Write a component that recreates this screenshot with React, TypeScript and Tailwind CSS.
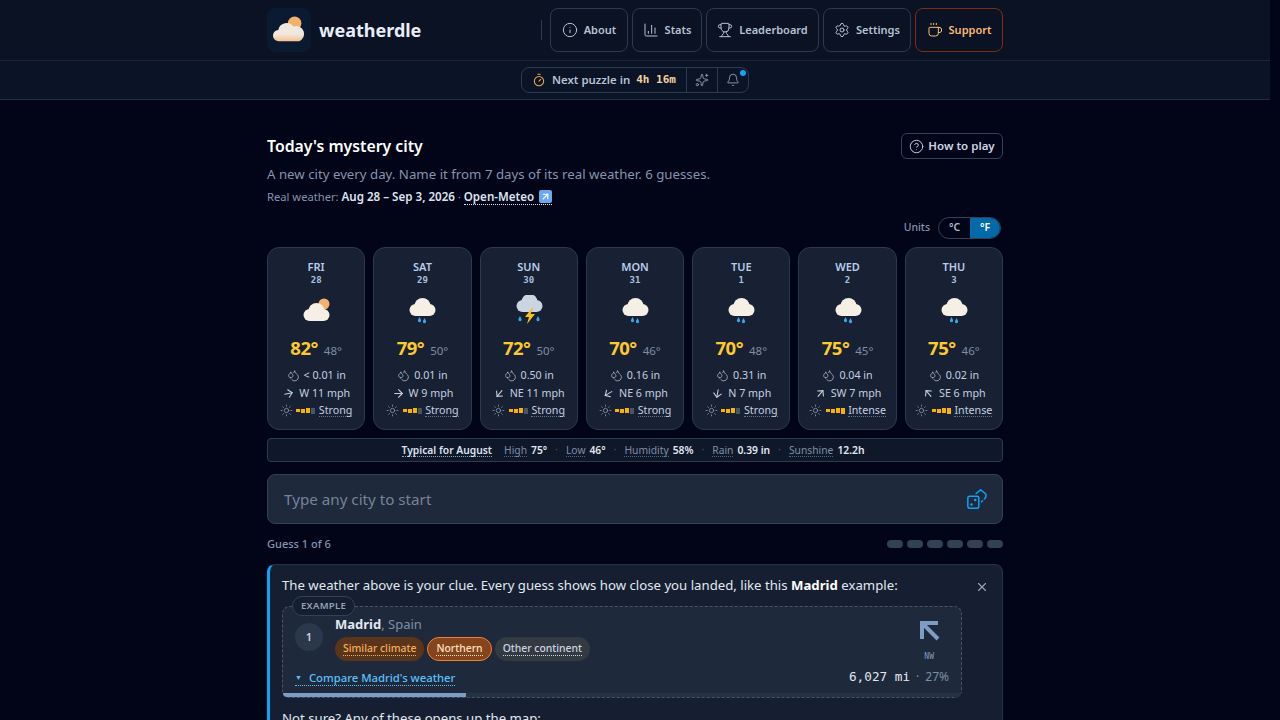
import { Info, ChartColumn, Trophy, Settings, Coffee, Timer, Sparkles, Bell, CircleHelp, Droplets, Sun, ArrowRight, X, ArrowUpLeft } from "lucide-react";
import type { ReactNode } from "react";

const days = [
  { day: "FRI", date: "28", icon: "sun", hi: "82°", lo: "48°", rain: "< 0.01 in", wind: "W 11 mph", rot: "-rotate-[12deg]", uv: "Strong", bars: 3 },
  { day: "SAT", date: "29", icon: "rain", hi: "79°", lo: "50°", rain: "0.01 in", wind: "W 9 mph", rot: "rotate-0", uv: "Strong", bars: 3 },
  { day: "SUN", date: "30", icon: "storm", hi: "72°", lo: "50°", rain: "0.50 in", wind: "NE 11 mph", rot: "rotate-[130deg]", uv: "Strong", bars: 3 },
  { day: "MON", date: "31", icon: "rain", hi: "70°", lo: "46°", rain: "0.16 in", wind: "NE 6 mph", rot: "rotate-[150deg]", uv: "Strong", bars: 3 },
  { day: "TUE", date: "1", icon: "rain", hi: "70°", lo: "48°", rain: "0.31 in", wind: "N 7 mph", rot: "rotate-[100deg]", uv: "Strong", bars: 3 },
  { day: "WED", date: "2", icon: "rain", hi: "75°", lo: "45°", rain: "0.04 in", wind: "SW 7 mph", rot: "-rotate-[50deg]", uv: "Intense", bars: 4 },
  { day: "THU", date: "3", icon: "rain", hi: "75°", lo: "46°", rain: "0.02 in", wind: "SE 6 mph", rot: "-rotate-[130deg]", uv: "Intense", bars: 4 },
];

function Cloud({ fill, dy }: { fill: string; dy: number }) {
  return (
    <g fill={fill} transform={`translate(0 ${dy})`}>
      <circle cx="9.5" cy="17" r="6" />
      <circle cx="16.5" cy="13" r="8" />
      <circle cx="23.5" cy="17" r="6" />
      <rect x="9.5" y="14" width="14" height="9" />
    </g>
  );
}

function WeatherIcon({ kind }: { kind: string }) {
  return (
    <svg viewBox="0 0 32 36" className="h-[36px] w-[32px]">
      {kind === "sun" && <circle cx="24" cy="9" r="5.5" fill="#f4b16c" />}
      {kind === "sun" && <Cloud fill="#f5efe6" dy={3} />}
      {kind === "rain" && <Cloud fill="#f5efe6" dy={-2} />}
      {kind === "storm" && <Cloud fill="#cbd5e1" dy={-6} />}
      {kind === "rain" && (
        <g fill="#38a9e8">
          <path d="M13.5 22l1.4 2.8a1.6 1.6 0 1 1-2.8 0z" />
          <path d="M18.5 23l1.4 2.8a1.6 1.6 0 1 1-2.8 0z" />
        </g>
      )}
      {kind === "storm" && (
        <g>
          <path d="M7 21l1.4 2.8a1.6 1.6 0 1 1-2.8 0zM25 21l1.4 2.8a1.6 1.6 0 1 1-2.8 0z" fill="#38a9e8" />
          <path d="M19 13l-7 9h4l-2 7 8-10h-4.5l3-6z" fill="#fbbf24" />
        </g>
      )}
    </svg>
  );
}

function NavButton({ icon, label, width, accent }: { icon: ReactNode; label: string; width: string; accent?: boolean }) {
  return (
    <button
      className={
        (accent
          ? "flex h-[44px] items-center justify-center gap-[6px] rounded-lg border border-[#7c2d12] text-[11px] font-semibold text-[#fdba74] "
          : "flex h-[44px] items-center justify-center gap-[6px] rounded-lg border border-[#2b3a4e] text-[11px] font-semibold text-[#b6c2d4] ") + width
      }
    >
      {icon}
      {label}
    </button>
  );
}

function UvBars({ filled }: { filled: number }) {
  return (
    <span className="flex items-center gap-[1px]">
      <span className="h-[3px] w-[4px] bg-[#fbb004]" />
      <span className="h-[4px] w-[4px] bg-[#fbb004]" />
      <span className="h-[5px] w-[4px] bg-[#fbb004]" />
      <span className={filled > 3 ? "h-[6px] w-[4px] bg-[#fbb004]" : "h-[6px] w-[4px] bg-[#475569]"} />
    </span>
  );
}

function DayCard({ d }: { d: (typeof days)[number] }) {
  return (
    <div className="flex h-[183px] flex-col items-center rounded-xl border border-[#2b3a4e] bg-[#172133] pt-[12px]">
      <div className="text-[11px] leading-[14px] font-semibold text-[#b9cdea]">{d.day}</div>
      <div className="mt-[1px] font-['DejaVu_Sans_Mono',monospace] text-[9px] leading-[10px] font-semibold text-[#a9c0e0]">{d.date}</div>
      <div className="mt-[10px]">
        <WeatherIcon kind={d.icon} />
      </div>
      <div className="mt-[3px] flex items-baseline gap-[6px]">
        <span className="text-[18.5px] leading-[28px] font-bold tracking-[-0.5px] text-[#fdc92f]">{d.hi}</span>
        <span className="text-[11.5px] text-[#7d8da6]">{d.lo}</span>
      </div>
      <div className="mt-[4px] flex h-[18px] items-center gap-[4px] text-[10.7px] text-[#c4d0e0]">
        <Droplets size={13} strokeWidth={1.5} className="text-[#aab7c9]" />
        {d.rain}
      </div>
      <div className="flex h-[18px] items-center gap-[4px] text-[10.7px] text-[#c4d0e0]">
        <ArrowRight size={13} strokeWidth={2} className={d.rot} />
        {d.wind}
      </div>
      <div className="flex h-[17px] items-center gap-[3.5px] text-[10.7px] text-[#c4d0e0]">
        <Sun size={13} strokeWidth={1.5} className="text-[#8a99ae]" />
        <UvBars filled={d.bars} />
        <span className="border-b border-dotted border-[#64748b] leading-[12px]">{d.uv}</span>
      </div>
    </div>
  );
}

function Stat({ label, value }: { label: string; value: string }) {
  return (
    <span className="flex items-center gap-[4px] pt-[1px]">
      <span className="border-b border-dotted border-[#56657b] leading-[12px] text-[#7f8ea6]">{label}</span>
      <span className="font-semibold text-[#e2e8f0]">{value}</span>
    </span>
  );
}

function Dot() {
  return <span className="text-[#475569]">·</span>;
}

function Chip({ className, children }: { className: string; children: ReactNode }) {
  return (
    <span className={"flex h-[24px] items-center rounded-full px-[8px] text-[10.4px] font-medium " + className}>
      <span className="border-b border-dotted border-current leading-[13px]">{children}</span>
    </span>
  );
}

export default function App() {
  return (
    <div className="flex h-[720px] overflow-hidden bg-[#020417] font-['Noto_Sans',sans-serif] text-[#e2e8f0]">
      <div className="min-w-0 flex-1">
        <header className="h-[61px] border-b border-[#1a2536] bg-[#0b1224]">
          <div className="mx-auto flex h-[60px] w-[736px] items-center">
            <div className="flex h-[44px] w-[44px] items-center justify-center rounded-lg bg-[#0a1a30]">
              <svg viewBox="0 0 32 32" className="h-[36px] w-[36px]">
                <defs>
                  <linearGradient id="logoCloud" x1="0" y1="0" x2="0" y2="1">
                    <stop offset="0.6" stopColor="#f1e9df" />
                    <stop offset="1" stopColor="#f6c190" />
                  </linearGradient>
                </defs>
                <circle cx="21" cy="10" r="6" fill="#f4b16c" />
                <path d="M7 26a5 5 0 0 1-.5-10A7.5 7.5 0 0 1 20 13a6.5 6.5 0 0 1 5 13z" fill="url(#logoCloud)" />
              </svg>
            </div>
            <span className="ml-[8px] text-[18px] font-bold text-[#e8edf7]">weatherdle</span>
            <div className="mr-[8px] ml-auto h-[20px] w-px bg-[#2b3a4e]" />
            <div className="flex gap-[4px]">
              <NavButton width="w-[78px]" icon={<Info size={16} strokeWidth={1.5} />} label="About" />
              <NavButton width="w-[70px]" icon={<ChartColumn size={16} strokeWidth={1.5} />} label="Stats" />
              <NavButton width="w-[113px]" icon={<Trophy size={16} strokeWidth={1.5} />} label="Leaderboard" />
              <NavButton width="w-[88px]" icon={<Settings size={16} strokeWidth={1.5} />} label="Settings" />
              <NavButton width="w-[88px]" icon={<Coffee size={16} strokeWidth={1.5} />} label="Support" accent />
            </div>
          </div>
        </header>

        <div className="flex h-[39px] items-center justify-center border-b border-[#232f40] bg-[#0b1326]">
          <div className="relative flex h-[26px] items-center rounded-lg border border-[#2b3a4e] text-[11.4px] font-semibold text-[#b6c2d4]">
            <div className="flex h-full items-center gap-[6px] px-[10px]">
              <Timer size={14} strokeWidth={1.75} className="text-[#f4a949]" />
              Next puzzle in
              <span className="font-['DejaVu_Sans_Mono',monospace] text-[11px] font-bold whitespace-pre text-[#f6cf9f]">4h 16m</span>
            </div>
            <div className="flex h-full w-[31px] items-center justify-center border-l border-[#2b3a4e]">
              <Sparkles size={14} strokeWidth={1.5} className="text-[#94a3b8]" />
            </div>
            <div className="flex h-full w-[31px] items-center justify-center border-l border-[#2b3a4e]">
              <Bell size={14} strokeWidth={1.5} className="text-[#94a3b8]" />
            </div>
            <span className="absolute top-[2px] right-[2px] h-[6px] w-[6px] rounded-full bg-[#0ea5f5]" />
          </div>
        </div>

        <main className="mx-auto w-[736px] pt-[33px]">
          <div className="flex items-start justify-between">
            <div>
              <h1 className="text-[15.8px] leading-[27px] font-semibold text-white">Today's mystery city</h1>
              <p className="mt-[4px] text-[13.25px] leading-[20px] text-[#8494ad]">A new city every day. Name it from 7 days of its real weather. 6 guesses.</p>
              <p className="mt-[3px] flex items-center text-[11.2px] leading-[20px] text-[#8494ad]">
                Real weather:&nbsp;<span className="text-[11.6px] font-semibold text-[#dbe3ee]">Aug 28 – Sep 3, 2026</span>&nbsp;·&nbsp;
                <span className="flex items-center gap-[5px] border-b border-dotted border-[#dbe3ee] text-[11.6px] leading-[14px] font-semibold text-[#dbe3ee]">
                  Open-Meteo
                  <span className="flex h-[13px] w-[13px] items-center justify-center rounded-[2px] bg-[#6aa9ee]">
                    <ArrowUpLeft size={11} strokeWidth={2.5} className="rotate-90 text-white" />
                  </span>
                </span>
              </p>
            </div>
            <button className="flex h-[26px] w-[102px] items-center justify-center gap-[4px] rounded-md border border-[#334155] text-[11.5px] font-semibold text-[#cbd5e1]">
              <CircleHelp size={15} strokeWidth={1.5} />
              How to play
            </button>
          </div>

          <div className="mt-[10px] flex items-center justify-end gap-[8px] pr-[2px]">
            <span className="text-[10.5px] font-medium text-[#8494ad]">Units</span>
            <div className="flex h-[22px] w-[63px] overflow-hidden rounded-full border border-[#334155] text-[10.5px] font-semibold">
              <span className="flex w-[31px] items-center justify-center text-[#aebbcc]">°C</span>
              <span className="flex flex-1 items-center justify-center bg-[#0369a8] text-white">°F</span>
            </div>
          </div>

          <div className="mt-[8px] grid grid-cols-7 gap-[8px]">
            {days.map((d) => (
              <DayCard key={d.day} d={d} />
            ))}
          </div>

          <div className="mt-[8px] flex h-[24px] items-center justify-center gap-[8px] rounded border border-[#2b3a4e] bg-[#0f1829] pr-[4px] text-[10.3px]">
            <span className="mr-[4px] border-b border-dotted border-[#94a3b8] leading-[12px] font-semibold text-[#dbe3ee]">Typical for August</span>
            <Stat label="High" value="75°" />
            <Dot />
            <Stat label="Low" value="46°" />
            <Dot />
            <Stat label="Humidity" value="58%" />
            <Dot />
            <Stat label="Rain" value="0.39 in" />
            <Dot />
            <Stat label="Sunshine" value="12.2h" />
          </div>

          <div className="mt-[12px] flex h-[50px] items-center rounded-lg border border-[#334155] bg-[#1e293b] pr-[14px] pl-[16px]">
            <input placeholder="Type any city to start" className="flex-1 bg-transparent text-[15.2px] outline-none placeholder:text-[#75839a]" />
            <svg viewBox="0 0 24 24" className="h-[22px] w-[22px] text-[#0ea5f5]" fill="none" stroke="currentColor" strokeWidth="1.6" strokeLinecap="round" strokeLinejoin="round">
              <rect x="2" y="9" width="12" height="13" rx="2" />
              <circle cx="6" cy="18" r="0.6" fill="currentColor" />
              <circle cx="10" cy="13" r="0.6" fill="currentColor" />
              <path d="M11 6l5-4 5 4c1.5 2 1 4-1 6M17 15l1-1" />
            </svg>
          </div>

          <div className="mt-[10px] flex h-[20px] items-center justify-between">
            <span className="mt-[1px] text-[11px] font-medium text-[#8494ad]">Guess 1 of 6</span>
            <div className="flex gap-[4px]">
              {[0, 1, 2, 3, 4, 5].map((i) => (
                <span key={i} className="h-[8px] w-[16px] rounded-full bg-[#334155]" />
              ))}
            </div>
          </div>

          <section className="relative mt-[10px] rounded-lg border border-l-[3px] border-[#263346] border-l-[#0ea5f5] bg-[#151f31] pt-[10px] pr-[40px] pb-[12px] pl-[12px]">
            <button className="absolute top-[15px] right-[13px] text-[#94a3b8]">
              <X size={14} />
            </button>
            <p className="text-[13.2px] leading-[20px] text-[#e2e8f0]">
              The weather above is your clue. Every guess shows how close you landed, like this <b className="font-bold text-white">Madrid</b> example:
            </p>
            <div className="relative mt-[11px] h-[92px] overflow-visible rounded-lg border border-dashed border-[#475569] bg-[#1e2a3c]">
              <span className="absolute -top-[11px] left-[9px] z-10 flex h-[20px] w-[63px] items-center justify-center rounded-full border border-[#334155] bg-[#151f31] text-[9.5px] font-semibold tracking-[0.3px] text-[#94a3b8]">EXAMPLE</span>
              <div className="flex h-[86px] pr-[12px] pl-[12px]">
                <div className="mt-[16px] flex h-[28px] w-[28px] items-center justify-center rounded-full bg-[#2b384c] text-[11px] font-semibold text-[#cbd5e1]">1</div>
                <div className="ml-[12px] flex-1 pt-[7px]">
                  <div className="text-[13px] leading-[20px] text-[#7f8ea6]">
                    <b className="font-bold text-[#e2e8f0]">Madrid</b>, Spain
                  </div>
                  <div className="mt-[3px] flex gap-[3px]">
                    <Chip className="bg-[#5a3519] text-[#f6ad5f]">Similar climate</Chip>
                    <Chip className="border border-[#f08030] bg-[#85441b] text-[#fde3c4]">Northern</Chip>
                    <Chip className="bg-[#343a42] text-[#cbd5e1]">Other continent</Chip>
                  </div>
                </div>
                <div className="flex flex-col items-end pt-[14px]">
                  <svg viewBox="0 0 20 20" className="mr-[9px] h-[20px] w-[20px] text-[#7f9cc4]" fill="none" stroke="currentColor" strokeWidth="4">
                    <path d="M2 18V2h16M3 3l15 15" />
                  </svg>
                  <span className="mt-[11px] mr-[15px] font-['DejaVu_Sans_Mono',monospace] text-[8px] leading-[10px] text-[#7f9cc4]">NW</span>
                  <div className="mt-[7px] flex items-center text-[12px] leading-[16px] whitespace-nowrap text-[#e2e8f0]">
                    <span className="font-['DejaVu_Sans_Mono',monospace] text-[12.7px]">6,027 mi</span>
                    <span className="mx-[6px] text-[#7f8ea6]">·</span>
                    <span className="text-[#7f8ea6]">27%</span>
                  </div>
                </div>
              </div>
              <div className="absolute top-[63px] left-[12px] flex items-center gap-[7px] border-b border-dotted border-[#5cc0f8] text-[11.3px] leading-[15px] font-medium text-[#5cc0f8]">
                <span className="text-[7px]">▼</span>
                Compare Madrid's weather
              </div>
              <div className="absolute right-0 bottom-0 left-0 h-[4px] overflow-hidden rounded-b-lg bg-[#263244]">
                <div className="h-full w-[27%] bg-[#7f9cc4]" />
              </div>
            </div>
            <p className="mt-[10px] text-[13.2px] leading-[20px] text-[#e2e8f0]">Not sure? Any of these opens up the map:</p>
          </section>
        </main>
      </div>
      <div className="w-[10px] shrink-0 bg-[#020417]" />
    </div>
  );
}
